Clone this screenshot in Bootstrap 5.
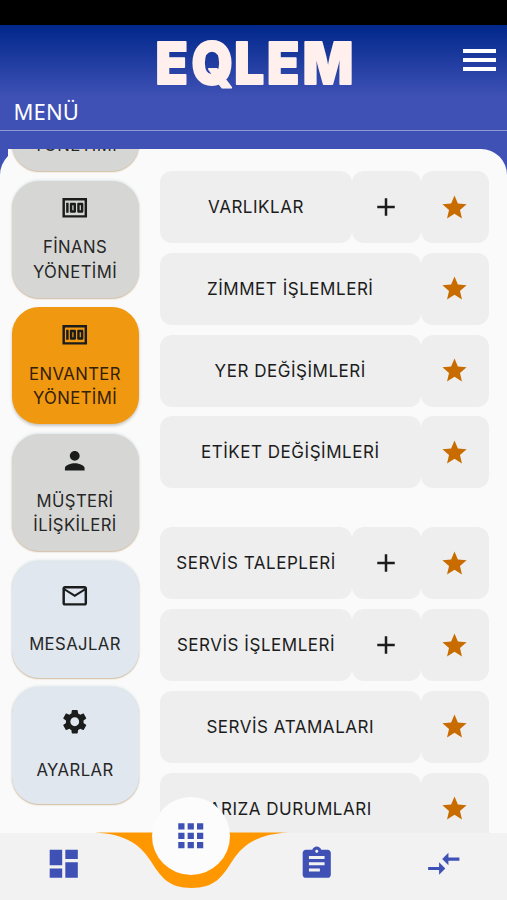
<!DOCTYPE html>
<html lang="tr">
<head>
<meta charset="utf-8">
<meta name="viewport" content="width=device-width, initial-scale=1">
<title>EQLEM</title>
<link rel="stylesheet" href="https://cdn.jsdelivr.net/npm/bootstrap@5.3.0/dist/css/bootstrap.min.css">
<style>
body{font-family:Inter,"Liberation Sans",sans-serif;color:#1f1f1f;background:#3f51b5;height:900px}
.status-strip{height:25px;background:#000}
.app-header{height:124px;background:linear-gradient(#00278b 0,#3f51b5 72px)}
.header-top{height:68px;padding-right:11px}
.logo-svg{margin-left:152px}
.menu-title{height:38px;padding:0 13.5px;font:22px/36px "Noto Sans",sans-serif;letter-spacing:.1px;color:#fff;border-bottom:1px solid #8e99d4}
.sheet-clip{height:684px}
.sheet{height:684px;background:#fafafa;border-radius:26px 26px 0 0}
.side-list{width:135px;margin-left:7.5px;padding:0 0 0 4px;background:#fafafa}
.side-stack{margin-top:-95px;gap:9.7px}
.tile{width:127px;height:117px;flex:none;border:0;border-radius:27px;background:#d6d7d5;box-shadow:0 1px 1.5px #d0b99c,0 -1px 3px #dde6ea;font-size:16.7px;line-height:24.3px;letter-spacing:.4px;color:#262626;gap:13px;padding-bottom:2.6px}
.tile svg,.cell svg,.bottom-bar svg{display:block;fill:currentColor;flex:none}
.tile svg{color:#1b1c1c}
.tile-soft{background:#e0e7ee;gap:21.5px;padding-bottom:2.6px}
.tile-active{background:#f0980f;color:#33200a;box-shadow:0 2px 3px #c9c6c0}
.menu-rows{width:329px;margin-left:17.5px;padding-top:22px}
.menu-row{height:72px;margin-bottom:9.8px;flex:none}
.cell{background:#eee;border-radius:12px;font-size:17px;letter-spacing:.53px;color:#1c1c1c}
.cell-label{padding-top:1.6px}
.cell-side{width:68.5px;flex:none}
.star-cell{color:#c96c00}
.row-break{margin-bottom:39px}
.bottom-bar{height:67px;background:#f2f2f2;color:#3f51b5}
.bottom-item{width:126.75px;padding-top:12px}
.notch{left:95px;top:-1px}
.fab{left:151.7px;top:-36px;width:78px;height:78px;border-radius:50%;background:#fcfcfc}
</style>
<script src="https://cdn.jsdelivr.net/npm/bootstrap@5.3.0/dist/js/bootstrap.bundle.min.js"></script>
</head>
<body class="overflow-hidden d-flex flex-column">
<svg class="d-none">
<symbol id="money" viewBox="0 0 24 24"><path d="M5 8h2v8H5zm7 0H9c-.55 0-1 .45-1 1v6c0 .55.45 1 1 1h3c.55 0 1-.45 1-1V9c0-.55-.45-1-1-1zm-1 6h-1v-4h1v4zm7-6h-3c-.55 0-1 .45-1 1v6c0 .55.45 1 1 1h3c.55 0 1-.45 1-1V9c0-.55-.45-1-1-1zm-1 6h-1v-4h1v4z"/><path d="M2 4v16h20V4H2zm2 14V6h16v12H4z"/></symbol>
<symbol id="star" viewBox="0 0 24 24"><path d="M12 17.27 18.18 21l-1.64-7.03L22 9.24l-7.19-.61L12 2 9.19 8.63 2 9.24l5.46 4.73L5.82 21z"/></symbol>
<symbol id="plus" viewBox="0 0 24 24"><path d="M19 13h-6v6h-2v-6H5v-2h6V5h2v6h6v2z"/></symbol>
</svg>
<div class="status-strip flex-shrink-0"></div>
<header class="app-header flex-shrink-0">
  <div class="header-top d-flex justify-content-between align-items-start">
    <svg class="logo-svg overflow-visible" width="204" height="68" role="img" aria-label="EQLEM"><text transform="scale(.92 1)" x="3.800 43 89.500 125 164" y="59" font-family="Inter, sans-serif" font-weight="900" font-size="57.500" fill="#fff0ee" stroke="#fff0ee" stroke-width="1.800" stroke-linejoin="round">EQLEM</text></svg>
    <svg width="33" height="23" class="mt-4" fill="#fff"><path d="M0 0h33v4H0zM0 9h33v4H0zM0 18h33v4H0z"/></svg>
  </div>
  <div class="menu-title">MENÜ</div>
</header>
<main class="sheet-clip overflow-hidden flex-shrink-0">
 <div class="sheet d-flex">
  <div class="side-list flex-shrink-0">
    <div class="side-stack d-flex flex-column">
      <button class="tile d-flex flex-column align-items-center justify-content-center"><svg width="29.5" height="29.5"><use href="#money"/></svg><span><br>YÖNETİMİ</span></button>
      <button class="tile d-flex flex-column align-items-center justify-content-center"><svg width="29.5" height="29.5"><use href="#money"/></svg><span>FİNANS<br>YÖNETİMİ</span></button>
      <button class="tile tile-active d-flex flex-column align-items-center justify-content-center"><svg width="29.5" height="29.5"><use href="#money"/></svg><span>ENVANTER<br>YÖNETİMİ</span></button>
      <button class="tile d-flex flex-column align-items-center justify-content-center"><svg width="29.5" height="29.5" viewBox="0 0 24 24"><path d="M12 12c2.21 0 4-1.79 4-4s-1.79-4-4-4-4 1.79-4 4 1.79 4 4 4zm0 2c-2.67 0-8 1.34-8 4v2h16v-2c0-2.66-5.33-4-8-4z"/></svg><span>MÜŞTERİ<br>İLİŞKİLERİ</span></button>
      <button class="tile tile-soft d-flex flex-column align-items-center justify-content-center"><svg width="29.5" height="29.5" viewBox="0 0 24 24"><path d="M22 6c0-1.100-.9-2-2-2H4c-1.100 0-2 .9-2 2v12c0 1.100.9 2 2 2h16c1.100 0 2-.9 2-2V6zm-2 0-8 5-8-5h16zm0 12H4V8l8 5 8-5v10z"/></svg><span>MESAJLAR</span></button>
      <button class="tile tile-soft d-flex flex-column align-items-center justify-content-center"><svg width="29.5" height="29.5" viewBox="0 0 24 24"><path d="M19.140 12.940c.04-.3.060-.61.060-.94 0-.32-.02-.64-.07-.94l2.030-1.580c.18-.14.230-.41.120-.61l-1.920-3.320c-.12-.22-.37-.29-.59-.22l-2.390.96c-.5-.38-1.030-.7-1.620-.94l-.36-2.540c-.04-.24-.24-.41-.48-.41h-3.840c-.24 0-.43.170-.47.410l-.36 2.540c-.59.240-1.130.570-1.620.94l-2.390-.96c-.22-.08-.47 0-.59.220L2.740 8.870c-.12.210-.08.470.12.610l2.030 1.580c-.05.3-.09.630-.09.94s.02.640.070.940l-2.030 1.580c-.18.140-.23.410-.12.610l1.920 3.320c.12.220.37.290.59.220l2.390-.96c.5.380 1.030.7 1.620.94l.36 2.540c.05.240.24.410.48.410h3.840c.24 0 .44-.17.470-.41l.36-2.540c.59-.24 1.130-.56 1.620-.94l2.390.96c.22.080.47 0 .59-.22l1.920-3.320c.12-.22.070-.47-.12-.61l-2.010-1.580zM12 15.600c-1.980 0-3.600-1.620-3.600-3.600s1.620-3.600 3.600-3.600 3.600 1.620 3.600 3.600-1.620 3.600-3.600 3.600z"/></svg><span>AYARLAR</span></button>
    </div>
  </div>
  <div class="menu-rows d-flex flex-column">
    <div class="menu-row d-flex"><div class="cell cell-label flex-grow-1 d-flex align-items-center justify-content-center">VARLIKLAR</div><div class="cell cell-side d-flex align-items-center justify-content-center"><svg width="30" height="30"><use href="#plus"/></svg></div><div class="cell cell-side star-cell d-flex align-items-center justify-content-center"><svg width="29" height="29"><use href="#star"/></svg></div></div>
    <div class="menu-row d-flex"><div class="cell cell-label flex-grow-1 d-flex align-items-center justify-content-center">ZİMMET İŞLEMLERİ</div><div class="cell cell-side star-cell d-flex align-items-center justify-content-center"><svg width="29" height="29"><use href="#star"/></svg></div></div>
    <div class="menu-row d-flex"><div class="cell cell-label flex-grow-1 d-flex align-items-center justify-content-center">YER DEĞİŞİMLERİ</div><div class="cell cell-side star-cell d-flex align-items-center justify-content-center"><svg width="29" height="29"><use href="#star"/></svg></div></div>
    <div class="menu-row row-break d-flex"><div class="cell cell-label flex-grow-1 d-flex align-items-center justify-content-center">ETİKET DEĞİŞİMLERİ</div><div class="cell cell-side star-cell d-flex align-items-center justify-content-center"><svg width="29" height="29"><use href="#star"/></svg></div></div>
    <div class="menu-row d-flex"><div class="cell cell-label flex-grow-1 d-flex align-items-center justify-content-center">SERVİS TALEPLERİ</div><div class="cell cell-side d-flex align-items-center justify-content-center"><svg width="30" height="30"><use href="#plus"/></svg></div><div class="cell cell-side star-cell d-flex align-items-center justify-content-center"><svg width="29" height="29"><use href="#star"/></svg></div></div>
    <div class="menu-row d-flex"><div class="cell cell-label flex-grow-1 d-flex align-items-center justify-content-center">SERVİS İŞLEMLERİ</div><div class="cell cell-side d-flex align-items-center justify-content-center"><svg width="30" height="30"><use href="#plus"/></svg></div><div class="cell cell-side star-cell d-flex align-items-center justify-content-center"><svg width="29" height="29"><use href="#star"/></svg></div></div>
    <div class="menu-row d-flex"><div class="cell cell-label flex-grow-1 d-flex align-items-center justify-content-center">SERVİS ATAMALARI</div><div class="cell cell-side star-cell d-flex align-items-center justify-content-center"><svg width="29" height="29"><use href="#star"/></svg></div></div>
    <div class="menu-row d-flex"><div class="cell cell-label flex-grow-1 d-flex align-items-center justify-content-center">ARIZA DURUMLARI</div><div class="cell cell-side star-cell d-flex align-items-center justify-content-center"><svg width="29" height="29"><use href="#star"/></svg></div></div>
  </div>
 </div>
</main>
<nav class="bottom-bar position-relative d-flex flex-shrink-0">
  <svg class="notch position-absolute" width="194" height="57" style="fill:#ff9800"><path d="M0 .5H194C162 2 148 13 138 28C127 45 120 56 96.500 56S66 45 55 28C45 13 31 2 0 .5z"/></svg>
  <div class="bottom-item d-flex justify-content-center"><svg width="37.500" height="37.500" viewBox="0 0 24 24"><path d="M3 13h8V3H3v10zm0 8h8v-6H3v6zm10 0h8V11h-8v10zm0-18v6h8V3h-8z"/></svg></div>
  <div class="bottom-item"></div>
  <div class="bottom-item d-flex justify-content-center"><svg width="37.500" height="37.500" viewBox="0 0 24 24"><path d="M19 3h-4.180C14.400 1.840 13.300 1 12 1c-1.300 0-2.400.84-2.820 2H5c-1.100 0-2 .9-2 2v14c0 1.100.9 2 2 2h14c1.100 0 2-.9 2-2V5c0-1.100-.9-2-2-2zm-7 0c.55 0 1 .45 1 1s-.45 1-1 1-1-.45-1-1 .45-1 1-1zm2 14H7v-2h7v2zm3-4H7v-2h10v2zm0-4H7V7h10v2z"/></svg></div>
  <div class="bottom-item d-flex justify-content-center"><svg width="37.500" height="37.500" viewBox="0 0 24 24"><path d="M9.010 14H2v2h7.010v3L13 15l-3.990-4v3zm5.980-1v-3H22V8h-7.010V5L11 9l3.990 4z"/></svg></div>
  <div class="fab position-absolute d-flex align-items-center justify-content-center"><svg width="37.500" height="37.500" viewBox="0 0 24 24"><path d="M4 8h4V4H4v4zm6 12h4v-4h-4v4zm-6 0h4v-4H4v4zm0-6h4v-4H4v4zm6 0h4v-4h-4v4zm6-10v4h4V4h-4zm-6 4h4V4h-4v4zm6 6h4v-4h-4v4zm0 6h4v-4h-4v4z"/></svg></div>
</nav>
</body>
</html>
